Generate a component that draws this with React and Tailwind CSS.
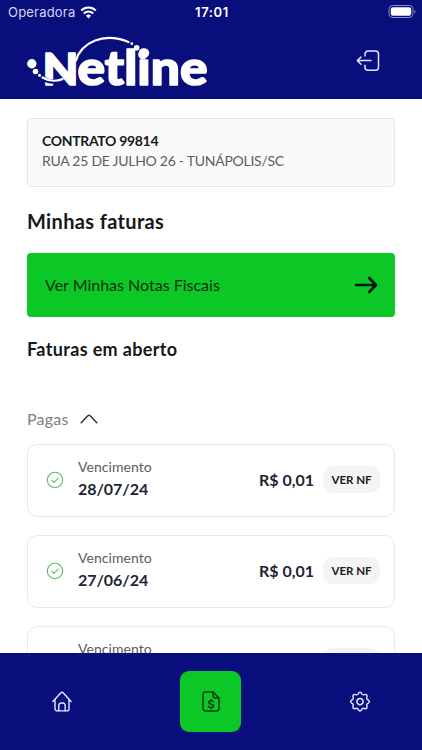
function StatusBar() {
  return (
    <div className="flex h-6 items-center justify-between pl-2 pr-[6px] text-white">
      <div className="flex w-[160px] items-center gap-[5px]">
        <span className="font-['Inter',sans-serif] text-[13px] leading-6 tracking-[0.2px] text-[#d5d8f2]">Operadora</span>
        <svg width="17" height="13" viewBox="0 0 17 13" fill="none" stroke="#fff" strokeWidth="2.1">
          <path d="M1.2 4.6a10.3 10.3 0 0 1 14.6 0" />
          <path d="M3.8 7.5a6.6 6.6 0 0 1 9.4 0" />
          <path d="M8.5 12.4 6 9.8a3.6 3.6 0 0 1 5 0z" fill="#fff" stroke="none" />
        </svg>
      </div>
      <span className="font-['Inter',sans-serif] text-[13px] font-semibold leading-6 tracking-[0.6px]">17:01</span>
      <div className="flex w-[160px] justify-end">
        <svg width="28" height="14" viewBox="0 0 28 14">
          <rect x="1" y=".5" width="24" height="12" rx="3.8" fill="none" stroke="#8a8dc4" />
          <rect x="2.8" y="2.2" width="20.4" height="8.6" rx="2.2" fill="#fff" />
          <path d="M26.5 4.700v4c1.3-.5 1.3-3.500 0-4z" fill="#8a8dc4" />
        </svg>
      </div>
    </div>
  );
}

function Logo() {
  return (
    <svg width="184" height="56" viewBox="26 34 184 56" overflow="visible">
      <g fontFamily="Lato, sans-serif" fontWeight="900" fill="#fff" stroke="#fff" strokeWidth="1.600" strokeLinejoin="round">
        <text x="42.500" y="85.200" fontSize="43.500" textLength="36" lengthAdjust="spacingAndGlyphs">N</text>
        <text x="77.500" y="85.200" fontSize="48" textLength="130" lengthAdjust="spacingAndGlyphs">etline</text>
      </g>
      <path d="M76 60.500C81 43 103 31.500 128.500 42" fill="none" stroke="#fff" strokeWidth="2.200" strokeLinecap="round" />
      <circle cx="131.800" cy="43.700" r="1.400" fill="#fff" />
      <circle cx="136.700" cy="47.700" r="2.800" fill="#fff" />
      <circle cx="142.800" cy="54.700" r="4.600" fill="#fff" />
      <circle cx="31.800" cy="63.700" r="4.700" fill="#fff" />
      <circle cx="35.500" cy="71.500" r="2.800" fill="#fff" />
      <circle cx="39.500" cy="75.300" r="1.500" fill="#fff" />
      <path d="M42 77.800c6 4 13 4.500 18.500 2.200" fill="none" stroke="#080f7c" strokeWidth="4.400" />
      <path d="M42.500 77.500c6 3.600 13 4.200 20 1.600" fill="none" stroke="#fff" strokeWidth="2.200" strokeLinecap="round" />
    </svg>
  );
}

function LogoutIcon() {
  return (
    <svg width="24" height="22" viewBox="0 0 24 22" fill="none" stroke="#dfe4ff" strokeWidth="1.5" strokeLinecap="round" strokeLinejoin="round">
      <path d="M9 6V4a3 3 0 0 1 3-3h7.500a3 3 0 0 1 3 3v13.200a3 3 0 0 1-3 3H12a3 3 0 0 1-3-3v-2" />
      <path d="M15 10.600H1.500M5 7l-3.600 3.600L5 14.200" />
    </svg>
  );
}

function Invoice({ date, top }) {
  return (
    <article className={"flex h-[73px] shrink-0 items-center rounded-[10px] border border-[#e9e9ee] bg-white pb-[2px] pl-[18px] pr-[14px] " + top}>
      <svg width="18" height="18" viewBox="0 0 18 18" fill="none" stroke="#5dbb63" strokeWidth="1.100" strokeLinecap="round" strokeLinejoin="round">
        <circle cx="9" cy="9" r="7.700" />
        <path d="m5.800 9.300 2.200 2.100 4.300-4.300" />
      </svg>
      <div className="ml-[14px] flex flex-1 flex-col pb-[3px]">
        <span className="text-[14px] leading-[20px] tracking-[0.06px] text-[#5b5b5f]">Vencimento</span>
        <span className="text-[16px] font-bold leading-[23px] tracking-[-0.05px] text-[#1e2433]">{date}</span>
      </div>
      <span className="text-[16px] font-bold text-[#1e2433]">R$ 0,01</span>
      <span className="ml-[9px] flex h-[27px] w-[57px] items-center justify-center rounded-[10px] bg-[#f4f4f4] text-[11.500px] font-bold text-[#202020]">
        VER NF
      </span>
    </article>
  );
}

function HomeIcon() {
  return (
    <svg width="20" height="21" viewBox="0 0 20 21" fill="none" stroke="#e6e9ff" strokeWidth="1.400" strokeLinecap="round" strokeLinejoin="round">
      <path d="M.9 10.500 8.900 1.700a1.500 1.500 0 0 1 2.200 0l8 8.800" />
      <path d="M3 8.500v9.200a2.200 2.200 0 0 0 2.200 2.200h9.600a2.200 2.200 0 0 0 2.200-2.200V8.500" />
      <path d="M6.800 19.700v-5.500a2.200 2.200 0 0 1 2.200-2.200h2a2.200 2.200 0 0 1 2.200 2.200v5.500" />
    </svg>
  );
}

function InvoiceIcon() {
  return (
    <svg width="18" height="21" viewBox="0 0 18 21" fill="none" stroke="#083b0c" strokeWidth="1.500" strokeLinecap="round" strokeLinejoin="round">
      <path d="M11 1H3.500A2.500 2.500 0 0 0 1 3.500v14A2.500 2.500 0 0 0 3.500 20h11a2.500 2.500 0 0 0 2.500-2.500V7z" />
      <path d="M11 1v3.700A2.300 2.300 0 0 0 13.300 7H17" />
      <path d="M11.300 10.700c-.4-.7-1.200-1-2.200-1-1.300 0-2.300.6-2.300 1.700 0 2.500 4.700 1.100 4.700 3.500 0 1.100-1 1.700-2.400 1.700-1.200 0-2.100-.5-2.500-1.300M9.100 8.600v1.100M9.100 16.600v1.100" />
    </svg>
  );
}

function GearIcon() {
  return (
    <svg width="22" height="22" viewBox="0 0 22 22" fill="none" stroke="#e6e9ff" strokeWidth="1.400" strokeLinejoin="round">
      <path d="M9.500 2.300q1.500-2.300 3 0l.7 1.100q.5.600 1.300.5l1.300-.3q2.700-.5 2.200 2.200l-.3 1.300q-.1.800.5 1.300l1.100.7q2.300 1.500 0 3l-1.100.7q-.6.500-.5 1.300l.3 1.300q.5 2.700-2.200 2.200l-1.300-.3q-.8-.1-1.300.5l-.7 1.100q-1.500 2.300-3 0l-.7-1.100q-.5-.6-1.300-.5l-1.300.3q-2.700.5-2.200-2.200l.3-1.300q.1-.8-.5-1.300l-1.100-.7q-2.300-1.500 0-3l1.100-.7q.6-.5.500-1.300L4 5.800q-.5-2.700 2.200-2.200l1.300.3q.8.1 1.300-.5z" />
      <circle cx="11" cy="10.600" r="3.100" />
    </svg>
  );
}

export default function App() {
  return (
    <div className="flex h-[750px] w-[422px] flex-col overflow-hidden bg-white font-['Lato',sans-serif]">
      <header className="h-[99px] shrink-0 bg-[#080f7c]">
        <StatusBar />
        <div className="flex items-start justify-between pl-[26px] pr-[42px] pt-[10px]">
          <Logo />
          <div className="pt-[16px]"><LogoutIcon /></div>
        </div>
      </header>
      <main className="flex min-h-0 flex-1 flex-col overflow-hidden px-[27px] pt-[19px]">
        <section className="flex h-[69px] w-[368px] shrink-0 flex-col rounded-[4px] border border-[#e6e6e6] bg-[#fafafa] px-[14px] pt-[12px]">
          <span className="text-[14px] font-bold leading-[20px] tracking-[-0.32px] text-[#18181a]">CONTRATO 99814</span>
          <span className="text-[14px] leading-[20px] tracking-[-0.26px] text-[#5d5d5f]">RUA 25 DE JULHO 26 - TUNÁPOLIS/SC</span>
        </section>
        <h1 className="mt-[20px] shrink-0 text-[20px] font-bold leading-[28px] tracking-[0.35px] text-[#18181a]">Minhas faturas</h1>
        <button className="mt-[18px] flex h-[64px] shrink-0 items-center justify-between rounded-[4px] bg-[#0bc827] pl-[18px] pr-[17px] text-[16px] text-[#052d09]">
          Ver Minhas Notas Fiscais
          <svg width="24" height="18" viewBox="0 0 24 18" fill="none" stroke="#031505" strokeWidth="2.600" strokeLinecap="round" strokeLinejoin="round">
            <path d="M2 9h20M15.200 2 22 9l-6.800 7" />
          </svg>
        </button>
        <h2 className="mt-[20px] shrink-0 text-[18px] font-bold leading-[24px] tracking-[0.35px] text-[#18181a]">Faturas em aberto</h2>
        <div className="mt-[46px] flex h-[24px] shrink-0 items-center gap-[11px] text-[16px] tracking-[0.2px] text-[#808080]">
          Pagas
          <svg width="18" height="10" viewBox="0 0 18 10" fill="none" stroke="#333" strokeWidth="1.500" strokeLinecap="round" strokeLinejoin="round">
            <path d="m1.200 8.800 6.600-7a1.600 1.600 0 0 1 2.400 0l6.600 7" />
          </svg>
        </div>
        <Invoice date="28/07/24" top="mt-[13px]" />
        <Invoice date="27/06/24" top="mt-[18px]" />
        <Invoice date="28/05/24" top="mt-[18px]" />
      </main>
      <nav className="flex h-[97px] shrink-0 items-center justify-between bg-[#080f7c] pl-[52px] pr-[51px]">
        <HomeIcon />
        <div className="flex size-[61px] items-center justify-center rounded-[9px] bg-[#0bc827]">
          <InvoiceIcon />
        </div>
        <GearIcon />
      </nav>
    </div>
  );
}
